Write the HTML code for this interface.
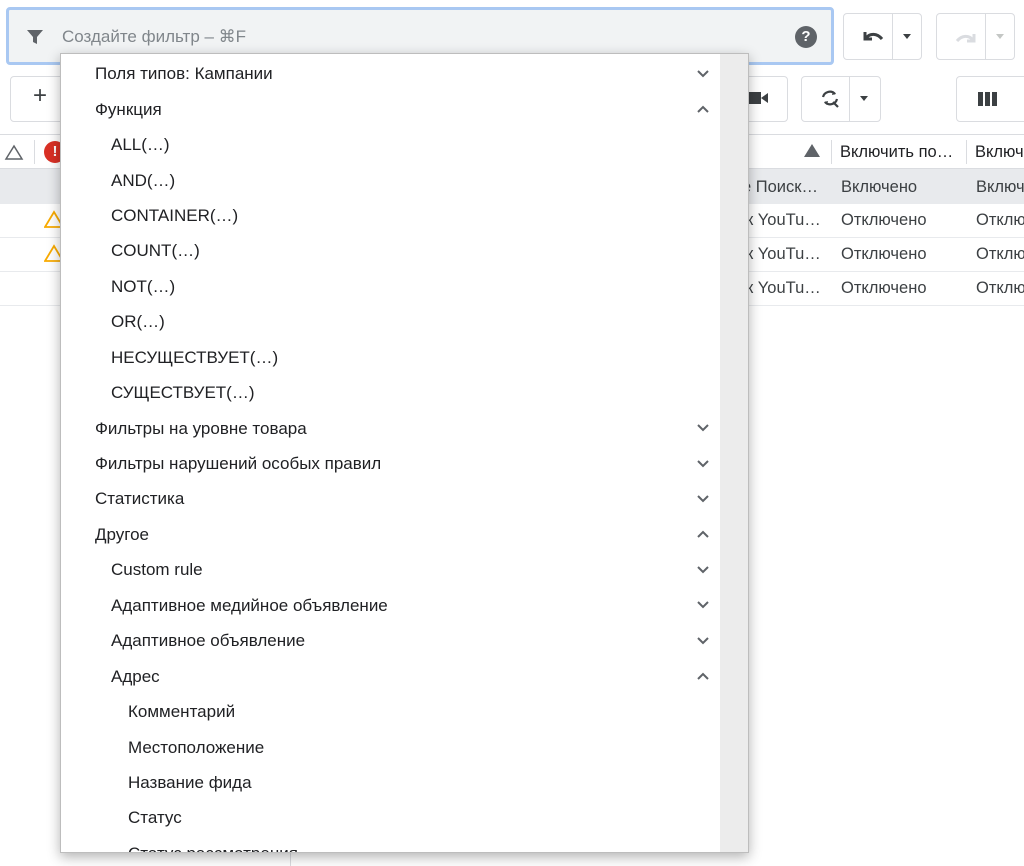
<!DOCTYPE html>
<html><head><meta charset="utf-8"><style>
*{box-sizing:border-box;margin:0;padding:0}
body{width:1024px;height:866px;background:#fff;font-family:"Liberation Sans",Arial,sans-serif;position:relative;overflow:hidden;color:#202124}
.abs{position:absolute}
.btn{position:absolute;border:1px solid #dadce0;border-radius:4px;background:#fff}
.t{position:absolute;font-size:16.5px;white-space:nowrap;line-height:20px}
.menu{position:absolute;left:60px;top:53px;width:689px;height:800px;background:#fff;border:1px solid #bdbdbd;box-shadow:0 4px 12px rgba(0,0,0,.3);overflow:hidden}
.sb{position:absolute;right:0;top:0;width:28px;height:100%;background:#ececec}
.it{position:absolute;font-size:17px;line-height:20px;white-space:nowrap;color:#202124}
.ch{position:absolute;left:636px;width:12px;height:8px}
</style></head><body>
<div class="abs" style="left:6px;top:7px;width:828px;height:58px;background:#f1f3f4;border:3px solid #a9c8f2;border-radius:4px"></div>
<svg class="abs" style="left:26px;top:28px" width="18" height="18" viewBox="0 0 18 18"><path d="M1 2h16l-6 7v7l-4-2V9z" fill="#5f6368"/></svg>
<div class="t" style="left:62px;top:27px;color:#80868b;font-size:17px">Создайте фильтр – ⌘F</div>
<div class="abs" style="left:795px;top:26px;width:22px;height:22px;border-radius:50%;background:#5f6368;color:#fff;font-weight:bold;font-size:15px;text-align:center;line-height:22px">?</div>
<div class="btn" style="left:843px;top:13px;width:79px;height:47px"></div>
<div class="abs" style="left:892px;top:13px;width:1px;height:47px;background:#dadce0"></div>
<svg class="abs" style="left:861px;top:28px" width="24" height="16" viewBox="0 0 24 16"><path d="M4 4v7h7" fill="none" stroke="#3c4043" stroke-width="3"/><path d="M5 10c4-5 11-5 16 1" fill="none" stroke="#3c4043" stroke-width="3"/></svg>
<div class="abs" style="left:903px;top:34px;border:4px solid transparent;border-top:5px solid #3c4043"></div>
<div class="btn" style="left:936px;top:13px;width:79px;height:47px"></div>
<div class="abs" style="left:985px;top:13px;width:1px;height:47px;background:#dadce0"></div>
<svg class="abs" style="left:954px;top:30px" width="24" height="16" viewBox="0 0 24 16"><path d="M20 4v7h-7" fill="none" stroke="#dadce0" stroke-width="3"/><path d="M19 10c-4-5-11-5-16 1" fill="none" stroke="#dadce0" stroke-width="3"/></svg>
<div class="abs" style="left:996px;top:34px;border:4px solid transparent;border-top:5px solid #c4c7c5"></div>
<div class="btn" style="left:10px;top:76px;width:80px;height:46px"></div>
<div class="t" style="left:33px;top:86px;font-size:24px;color:#3c4043">+</div>
<div class="btn" style="left:700px;top:76px;width:88px;height:46px"></div>
<svg class="abs" style="left:748px;top:90px" width="20" height="16"><rect x="0" y="2" width="13" height="12" fill="#3c4043"/><path d="M13 8l7-5v10z" fill="#3c4043"/></svg>
<div class="btn" style="left:801px;top:76px;width:80px;height:46px"></div>
<div class="abs" style="left:849px;top:76px;width:1px;height:46px;background:#dadce0"></div>
<svg class="abs" style="left:819px;top:88px" width="22" height="22" viewBox="0 0 22 22"><path d="M4 9a7 7 0 0 1 12-3M18 11a7 7 0 0 1-12 3" fill="none" stroke="#3c4043" stroke-width="2.2"/><path d="M14 3l3 3-4 1zM8 17l-3-3 4-1z" fill="#3c4043"/><path d="M14 14l5 5" stroke="#3c4043" stroke-width="2.2"/></svg>
<div class="abs" style="left:860px;top:96px;border:4px solid transparent;border-top:5px solid #3c4043"></div>
<div class="btn" style="left:956px;top:76px;width:80px;height:46px"></div>
<svg class="abs" style="left:978px;top:92px" width="20" height="14"><rect x="0" y="0" width="5" height="14" fill="#3c4043"/><rect x="7" y="0" width="5" height="14" fill="#3c4043"/><rect x="14" y="0" width="5" height="14" fill="#3c4043"/></svg>
<div class="abs" style="left:0;top:134px;width:1024px;height:1px;background:#dadce0"></div>
<div class="abs" style="left:0;top:168px;width:1024px;height:36px;background:#e8eaed;border-top:1px solid #dadce0"></div>
<div class="abs" style="left:0;top:237px;width:1024px;height:1px;background:#e8eaed"></div>
<div class="abs" style="left:0;top:271px;width:1024px;height:1px;background:#e8eaed"></div>
<div class="abs" style="left:0;top:305px;width:1024px;height:1px;background:#e8eaed"></div>
<svg class="abs" style="left:4px;top:144px" width="20" height="17"><path d="M10 2L18 15H2z" fill="none" stroke="#5f6368" stroke-width="1.5"/></svg>
<div class="abs" style="left:34px;top:140px;width:1px;height:24px;background:#dadce0"></div>
<div class="abs" style="left:44px;top:141px;width:22px;height:22px;border-radius:50%;background:#d93025;color:#fff;font-weight:bold;font-size:15px;text-align:center;line-height:22px">!</div>
<svg class="abs" style="left:44px;top:210px" width="20" height="18"><path d="M10 2L19 17H1z" fill="#fff" stroke="#f9ab00" stroke-width="1.8"/></svg>
<svg class="abs" style="left:44px;top:244px" width="20" height="18"><path d="M10 2L19 17H1z" fill="#fff" stroke="#f9ab00" stroke-width="1.8"/></svg>
<div class="abs" style="left:804px;top:144px;border:8px solid transparent;border-bottom:13px solid #5f6368;border-top:0"></div>
<div class="abs" style="left:831px;top:140px;width:1px;height:24px;background:#dadce0"></div>
<div class="abs" style="left:966px;top:140px;width:1px;height:24px;background:#dadce0"></div>
<div class="t" style="left:840px;top:142px">Включить по…</div>
<div class="t" style="left:975px;top:142px">Включ</div>
<div class="t" style="left:742px;top:177px;color:#3c4043">е Поиск…</div>
<div class="t" style="left:746px;top:210px;color:#3c4043">к YouTu…</div>
<div class="t" style="left:746px;top:244px;color:#3c4043">к YouTu…</div>
<div class="t" style="left:746px;top:278px;color:#3c4043">к YouTu…</div>
<div class="t" style="left:841px;top:177px;color:#3c4043">Включено</div>
<div class="t" style="left:841px;top:210px;color:#3c4043">Отключено</div>
<div class="t" style="left:841px;top:244px;color:#3c4043">Отключено</div>
<div class="t" style="left:841px;top:278px;color:#3c4043">Отключено</div>
<div class="t" style="left:976px;top:177px;color:#3c4043">Включ</div>
<div class="t" style="left:976px;top:210px;color:#3c4043">Отклю</div>
<div class="t" style="left:976px;top:244px;color:#3c4043">Отклю</div>
<div class="t" style="left:976px;top:278px;color:#3c4043">Отклю</div>
<div class="abs" style="left:290px;top:853px;width:1px;height:13px;background:#dadce0"></div>
<div class="menu"><div class="sb"></div>
<div class="it" style="left:34px;top:10px">Поля типов: Кампании</div>
<div class="it" style="left:34px;top:46px">Функция</div>
<div class="it" style="left:50px;top:81px">ALL(…)</div>
<div class="it" style="left:50px;top:117px">AND(…)</div>
<div class="it" style="left:50px;top:152px">CONTAINER(…)</div>
<div class="it" style="left:50px;top:187px">COUNT(…)</div>
<div class="it" style="left:50px;top:223px">NOT(…)</div>
<div class="it" style="left:50px;top:258px">OR(…)</div>
<div class="it" style="left:50px;top:294px">НЕСУЩЕСТВУЕТ(…)</div>
<div class="it" style="left:50px;top:329px">СУЩЕСТВУЕТ(…)</div>
<div class="it" style="left:34px;top:365px">Фильтры на уровне товара</div>
<div class="it" style="left:34px;top:400px">Фильтры нарушений особых правил</div>
<div class="it" style="left:34px;top:435px">Статистика</div>
<div class="it" style="left:34px;top:471px">Другое</div>
<div class="it" style="left:50px;top:506px">Custom rule</div>
<div class="it" style="left:50px;top:542px">Адаптивное медийное объявление</div>
<div class="it" style="left:50px;top:577px">Адаптивное объявление</div>
<div class="it" style="left:50px;top:613px">Адрес</div>
<div class="it" style="left:67px;top:648px">Комментарий</div>
<div class="it" style="left:67px;top:684px">Местоположение</div>
<div class="it" style="left:67px;top:719px">Название фида</div>
<div class="it" style="left:67px;top:754px">Статус</div>
<div class="it" style="left:67px;top:790px">Статус рассмотрения</div>
<svg class="ch" style="top:16px" viewBox="0 0 12 8"><path d="M1 1l5 5 5-5" fill="none" stroke="#5f6368" stroke-width="2"/></svg>
<svg class="ch" style="top:51px" viewBox="0 0 12 8"><path d="M1 7l5-5 5 5" fill="none" stroke="#5f6368" stroke-width="2"/></svg>
<svg class="ch" style="top:370px" viewBox="0 0 12 8"><path d="M1 1l5 5 5-5" fill="none" stroke="#5f6368" stroke-width="2"/></svg>
<svg class="ch" style="top:406px" viewBox="0 0 12 8"><path d="M1 1l5 5 5-5" fill="none" stroke="#5f6368" stroke-width="2"/></svg>
<svg class="ch" style="top:441px" viewBox="0 0 12 8"><path d="M1 1l5 5 5-5" fill="none" stroke="#5f6368" stroke-width="2"/></svg>
<svg class="ch" style="top:476px" viewBox="0 0 12 8"><path d="M1 7l5-5 5 5" fill="none" stroke="#5f6368" stroke-width="2"/></svg>
<svg class="ch" style="top:512px" viewBox="0 0 12 8"><path d="M1 1l5 5 5-5" fill="none" stroke="#5f6368" stroke-width="2"/></svg>
<svg class="ch" style="top:547px" viewBox="0 0 12 8"><path d="M1 1l5 5 5-5" fill="none" stroke="#5f6368" stroke-width="2"/></svg>
<svg class="ch" style="top:583px" viewBox="0 0 12 8"><path d="M1 1l5 5 5-5" fill="none" stroke="#5f6368" stroke-width="2"/></svg>
<svg class="ch" style="top:618px" viewBox="0 0 12 8"><path d="M1 7l5-5 5 5" fill="none" stroke="#5f6368" stroke-width="2"/></svg>
</div>
</body></html>
